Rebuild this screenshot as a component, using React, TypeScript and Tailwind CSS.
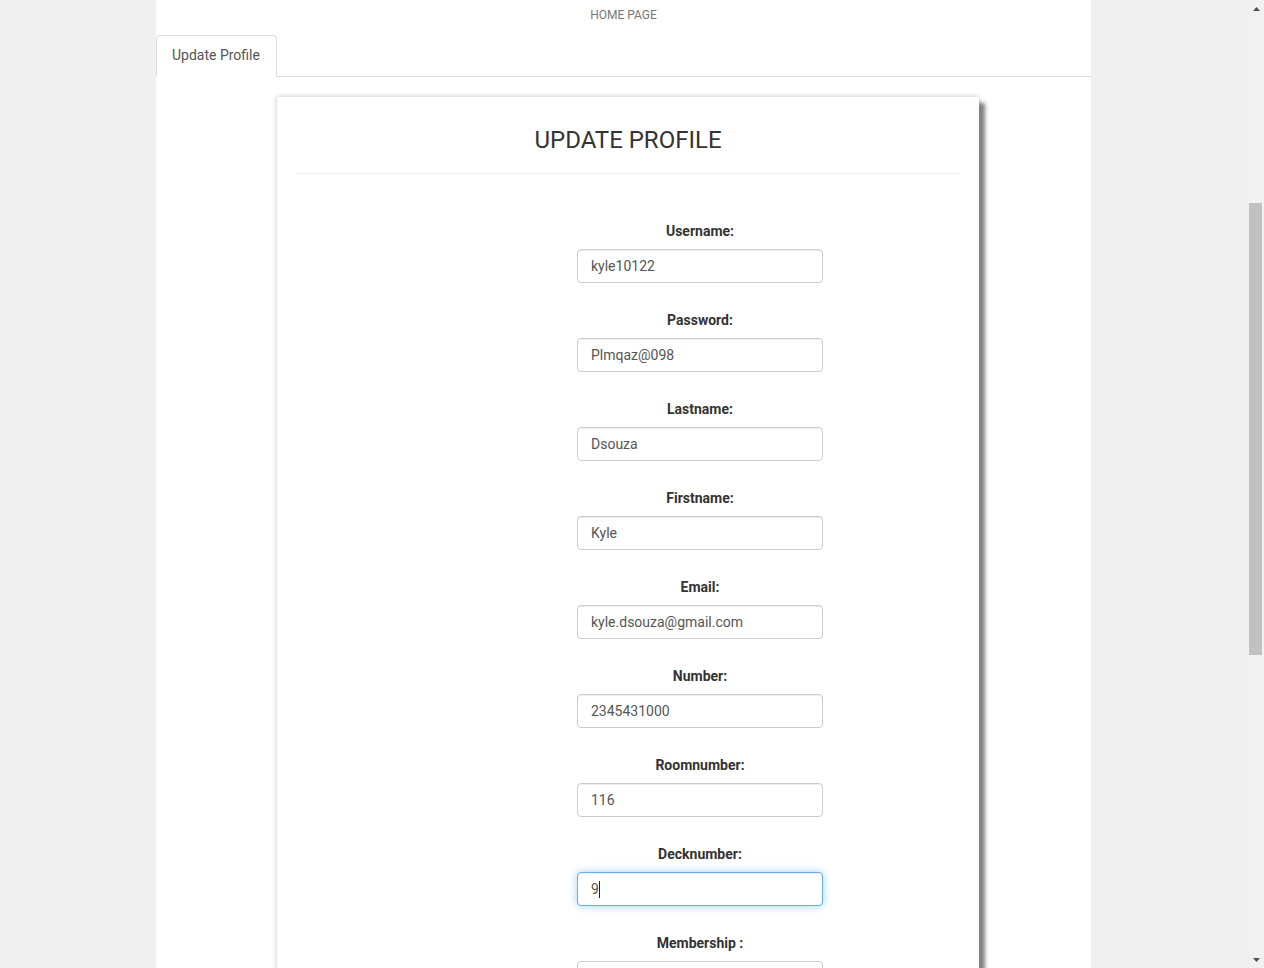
import React from "react";

const fields = [
  { label: "Username:", value: "kyle10122" },
  { label: "Password:", value: "Plmqaz@098" },
  { label: "Lastname:", value: "Dsouza" },
  { label: "Firstname:", value: "Kyle" },
  { label: "Email:", value: "kyle.dsouza@gmail.com" },
  { label: "Number:", value: "2345431000" },
  { label: "Roomnumber:", value: "116" },
];

function Field({ label, value }: { label: string; value: string }) {
  return (
    <div className="flex flex-col items-center mb-[27px]">
      <label className="text-[14px] leading-[20px] font-bold text-[#333] mb-[8px]">{label}</label>
      <input
        readOnly
        defaultValue={value}
        className="w-[246px] h-[34px] px-[13px] border border-[#ccc] rounded-[4px] text-[14px] text-[#555] bg-white outline-none shadow-[inset_0_1px_1px_rgba(0,0,0,0.075)]"
      />
    </div>
  );
}

export default function App() {
  return (
    <div className="h-[968px] w-[1264px] overflow-hidden flex bg-[#f0f0f0] font-['Roboto','Liberation_Sans',sans-serif]">
      {/* page */}
      <div className="flex-1 h-full overflow-hidden">
        <div className="ml-[156px] w-[935px] h-full bg-white">
          {/* header */}
          <div className="h-[35px] pt-[7px] text-center text-[12px] leading-[16px] text-[#777]">HOME PAGE</div>

          {/* tabs */}
          <div className="flex border-b border-[#ddd] h-[42px]">
            <div className="h-[42px] w-[121px] px-[15px] border border-[#ddd] border-b-white rounded-t-[4px] bg-white text-[14px] leading-[39px] text-[#555]">
              Update Profile
            </div>
          </div>

          {/* card */}
          <div className="ml-[121px] mt-[20px] w-[702px] bg-white shadow-[6px_6px_4px_#808080,0_0_5px_rgba(0,0,0,0.25)] px-[20px] pt-[30px] pb-[40px]">
            <h2 className="text-center text-[24px] leading-[26px] text-[#333]">UPDATE PROFILE</h2>
            <hr className="mt-[20px] border-t border-[#eee]" />

            <div className="pl-[280px] pt-[47px]">
              <div className="w-[246px]">
                {fields.map((f) => (
                  <Field key={f.label} label={f.label} value={f.value} />
                ))}

                <div className="flex flex-col items-center mb-[27px]">
                  <label className="text-[14px] leading-[20px] font-bold text-[#333] mb-[8px]">Decknumber:</label>
                  <div className="w-[246px] h-[34px] px-[13px] border border-[#66afe9] rounded-[4px] text-[14px] leading-[32px] text-[#555] bg-white shadow-[inset_0_1px_1px_rgba(0,0,0,0.075),0_0_8px_rgba(102,175,233,0.6)] flex items-center">
                    <span>9</span>
                    <span className="inline-block w-px h-[17px] bg-[#222]" />
                  </div>
                </div>

                <div className="flex flex-col items-center">
                  <label className="text-[14px] leading-[20px] font-bold text-[#333] mb-[8px]">Membership :</label>
                  <div className="w-[246px] h-[34px] border border-[#ccc] rounded-[4px] bg-white" />
                </div>
              </div>
            </div>
          </div>
        </div>
      </div>

      {/* scrollbar */}
      <div className="w-[15px] h-full bg-[#f1f1f1] flex flex-col items-center">
        <div className="h-[17px] flex items-center justify-center">
          <svg width="7" height="4" viewBox="0 0 7 4">
            <path d="M3.5 0 L7 4 L0 4 Z" fill="#505050" />
          </svg>
        </div>
        <div className="mt-[186px] w-[13px] h-[452px] bg-[#c1c1c1] self-start" />
        <div className="flex-1" />
        <div className="h-[17px] flex items-center justify-center">
          <svg width="7" height="4" viewBox="0 0 7 4">
            <path d="M0 0 L7 0 L3.5 4 Z" fill="#505050" />
          </svg>
        </div>
      </div>
    </div>
  );
}
